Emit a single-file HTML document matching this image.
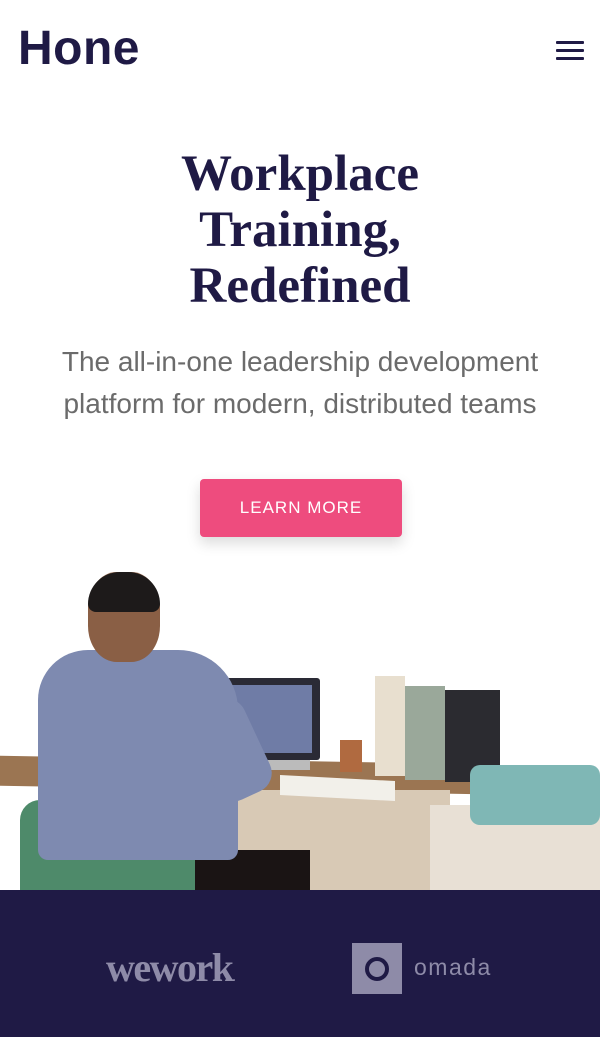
<!DOCTYPE html>
<html><head><meta charset="utf-8"><style>
*{margin:0;padding:0;box-sizing:border-box}
body{width:600px;height:1037px;overflow:hidden;background:#fff;font-family:"Liberation Sans",sans-serif;position:relative}
.logo{position:absolute;left:18px;top:21px;font-size:48px;font-weight:bold;color:#1f1a45;letter-spacing:0.5px}
.menu{position:absolute;left:556px;width:28px;height:3px;background:#1f1a45;border-radius:1px}
h1{position:absolute;top:146px;left:0;width:600px;text-align:center;font-family:"Liberation Serif",serif;font-weight:bold;font-size:51px;line-height:56px;color:#1f1a45}
p.sub{position:absolute;top:341px;left:0;width:600px;text-align:center;font-size:28px;line-height:42px;color:#6b6b6b}
.btn{position:absolute;left:200px;top:479px;width:202px;height:58px;background:#ee4c7e;border-radius:4px;color:#fff;font-size:17px;letter-spacing:1px;text-align:center;line-height:58px;box-shadow:0 6px 14px rgba(0,0,0,.15)}
.band{position:absolute;left:0;top:890px;width:600px;height:147px;background:#1f1a45}
.r{position:absolute}
</style></head><body>
<div class="logo">Hone</div>
<div class="menu" style="top:41px"></div><div class="menu" style="top:49px"></div><div class="menu" style="top:57px"></div>
<h1>Workplace<br>Training,<br>Redefined</h1>
<p class="sub">The all-in-one leadership development<br>platform for modern, distributed teams</p>
<div class="btn">LEARN MORE</div>
<div class="r" style="left:0;top:760px;width:480px;height:30px;background:#9b7552;transform:skewY(1deg)"></div>
<div class="r" style="left:170px;top:790px;width:280px;height:100px;background:#d8c9b5"></div>
<div class="r" style="left:430px;top:805px;width:170px;height:85px;background:#e8e0d5"></div>
<div class="r" style="left:205px;top:678px;width:115px;height:82px;background:#2a2a35;border-radius:3px"></div>
<div class="r" style="left:212px;top:685px;width:100px;height:68px;background:#6f7ca6"></div>
<div class="r" style="left:220px;top:760px;width:90px;height:10px;background:#bbb"></div>
<div class="r" style="left:375px;top:676px;width:30px;height:100px;background:#e8dfcf"></div>
<div class="r" style="left:405px;top:686px;width:40px;height:94px;background:#9aa89a"></div>
<div class="r" style="left:445px;top:690px;width:55px;height:92px;background:#2b2b30"></div>
<div class="r" style="left:470px;top:765px;width:130px;height:60px;background:#7fb7b5;border-radius:10px"></div>
<div class="r" style="left:340px;top:740px;width:22px;height:32px;background:#b06a40"></div>
<div class="r" style="left:280px;top:778px;width:115px;height:20px;background:#f2f0ea;transform:skewY(3deg)"></div>
<div class="r" style="left:20px;top:800px;width:180px;height:90px;background:#4e8a6a;border-radius:20px 20px 0 0"></div>
<div class="r" style="left:195px;top:850px;width:115px;height:40px;background:#1a1414"></div>
<div class="r" style="left:38px;top:650px;width:200px;height:210px;background:#7e8ab0;border-radius:50px 60px 10px 10px"></div>
<div class="r" style="left:88px;top:572px;width:72px;height:90px;background:#8a5f45;border-radius:40%"></div>
<div class="r" style="left:88px;top:572px;width:72px;height:40px;background:#1d1a1a;border-radius:40px 40px 10px 10px"></div>
<div class="r" style="left:200px;top:700px;width:60px;height:100px;background:#7e8ab0;border-radius:20px;transform:rotate(-25deg)"></div>
<div class="band"></div>
<div class="r" style="left:106px;top:944px;font-family:'Liberation Serif',serif;font-weight:bold;font-size:40px;color:#8e8ba8;letter-spacing:-1.5px">wework<span style="font-size:12px">.</span></div>
<div class="r" style="left:352px;top:943px;width:50px;height:51px;background:#8e8ba8"></div>
<div class="r" style="left:365px;top:957px;width:24px;height:24px;border:4px solid #1f1a45;border-radius:50%"></div>
<div class="r" style="left:414px;top:954px;font-size:23px;color:#8e8ba8;letter-spacing:1.5px">omada</div>
</body></html>
